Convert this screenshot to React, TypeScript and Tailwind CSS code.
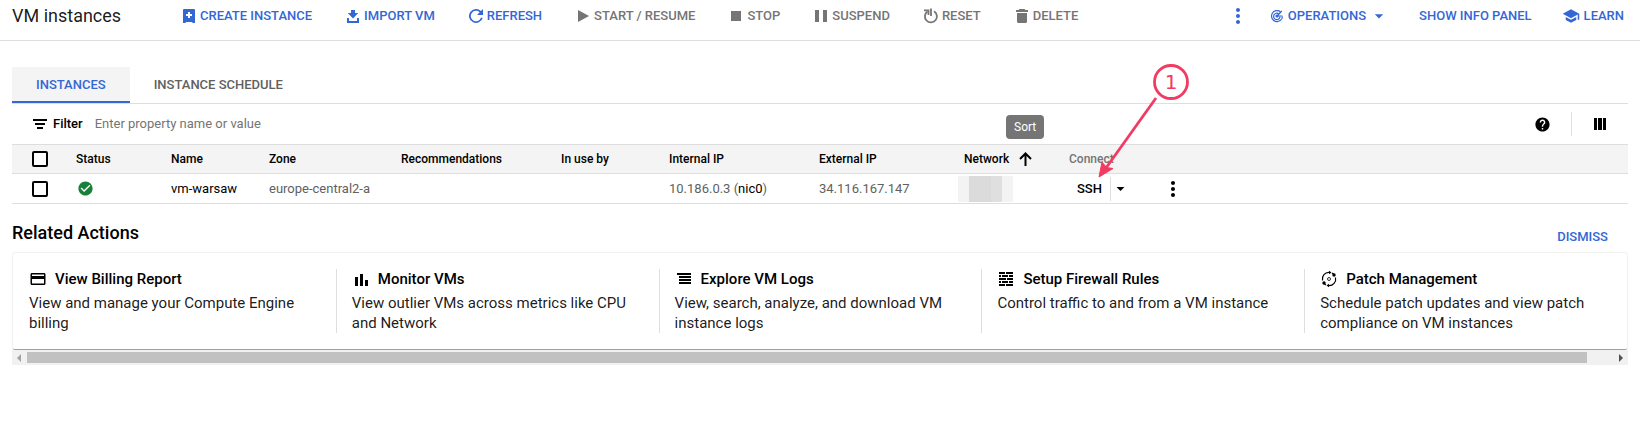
import React from 'react';
import {
  MdArrowDropDown,
  MdCheckCircle,
  MdCreditCard,
  MdHelp,
  MdMoreVert,
  MdSchool,
} from 'react-icons/md';

type IconProps = { className?: string };

const svgProps = { width: 18, height: 18, viewBox: '0 0 18 18', fill: 'currentColor', 'aria-hidden': true } as const;

const CreateIcon = () => (
  <svg {...svgProps}>
    <path fillRule="evenodd" d="M4 2h10a1 1 0 0 1 1 1v13h-2l-1.500-1h-5L5 16H3V3a1 1 0 0 1 1-1zm4 3v2H6v2h2v2h2V9h2V7h-2V5z" />
  </svg>
);
const ImportIcon = () => (
  <svg {...svgProps}>
    <path d="M7 3h4v3h3.200L9 11.500 3.800 6H7zM3 11h2v3h8v-3h2v5H3z" />
  </svg>
);
const RefreshIcon = () => (
  <svg {...svgProps}>
    <path d="M13.950 4.050A7 7 0 1 0 15.760 10.800H13.900A5.200 5.200 0 1 1 12.650 5.350L10 8h6V2z" />
  </svg>
);
const StartIcon = () => (
  <svg {...svgProps}>
    <path d="M4 3l11 6-11 6z" />
  </svg>
);
const StopIcon = () => (
  <svg {...svgProps}>
    <path d="M4 4h10v10H4z" />
  </svg>
);
const SuspendIcon = () => (
  <svg {...svgProps}>
    <path d="M3 3h4v12H3zM11 3h4v12h-4z" />
  </svg>
);
const ResetIcon = () => (
  <svg {...svgProps} fill="none" stroke="currentColor" strokeWidth="1.8">
    <path d="M12 4.300a6 6 0 1 1-6.500.2" />
    <path d="M9 1.500V9" />
    <path d="M2 3.400h4.500V8" />
  </svg>
);
const DeleteIcon = () => (
  <svg {...svgProps}>
    <path d="M6.500 2h5l1 1H15v2H3V3h2.500zM4 6h10v8.500a1.500 1.500 0 0 1-1.500 1.500h-7A1.500 1.500 0 0 1 4 14.500z" />
  </svg>
);
const OperationsIcon = () => (
  <svg {...svgProps} fill="none" stroke="currentColor" strokeWidth="1.2">
    <path d="M14.500 9.500a5.500 5.500 0 1 1-2-4.700" />
    <path d="M12 9.500a3.200 3.200 0 1 1-1.200-2.600" />
    <path d="M9 9l4.800-5M9 9h5.500" />
    <circle cx="9" cy="9" r="1" fill="currentColor" />
  </svg>
);
const MonitorIcon = () => (
  <svg {...svgProps}>
    <path d="M3 7h3v9H3zM8 4h3v12H8zM13 10h3v6h-3z" />
  </svg>
);
const LogsIcon = () => (
  <svg {...svgProps}>
    <path d="M2 3h14v2H2zM4 6h12v2H4zM4 9h12v2H4zM4 12h12v2H4z" />
  </svg>
);
const FirewallIcon = () => (
  <svg {...svgProps}>
    <path d="M2 2h6v2H2zM9 2h7v2H9zM2 5h2v2H2zM5 5h6v2H5zM12 5h4v2h-4zM2 8h7v2H2zM10 8h6v2h-6zM2 11h2v2H2zM5 11h6v2H5zM12 11h4v2h-4zM2 14h6v2H2zM9 14h7v2H9z" />
  </svg>
);
const PatchIcon = () => (
  <svg {...svgProps} fill="none" stroke="currentColor" strokeWidth="1.2">
    <path d="M2.500 10.500A6.600 6.600 0 0 1 9.500 2.400M15.500 7.500A6.600 6.600 0 0 1 8.500 15.600M4.200 13.700A6.600 6.600 0 0 0 6 15M12 3l1.800 1.300" />
    <circle cx="9" cy="9" r="1.500" strokeWidth="0.8" />
    <circle cx="14" cy="5" r="1.700" fill="currentColor" stroke="none" />
    <circle cx="4" cy="13" r="1.700" fill="currentColor" stroke="none" />
    <path d="M9 .8l2.500 1.700L9 4.200zM9 13.800l-2.500 1.700L9 17.200z" fill="currentColor" stroke="none" />
  </svg>
);
const FilterIcon = () => (
  <svg width="14" height="10" viewBox="0 0 14 10" fill="currentColor" aria-hidden="true">
    <path d="M0 0h14v2H0zM2 4h10v2H2zM4 8h6v2H4z" />
  </svg>
);
const ColumnsIcon = () => (
  <svg width="12" height="12" viewBox="0 0 12 12" fill="currentColor" aria-hidden="true">
    <path d="M0 0h3v12H0zM4 0h4v12H4zM9 0h3v12H9z" />
  </svg>
);
const SortUpIcon = () => (
  <svg width="13" height="14" viewBox="0 0 13 14" fill="none" stroke="currentColor" strokeWidth="2" aria-hidden="true">
    <path d="M6.500 14V2M1 7l5.500-5.500L12 7" />
  </svg>
);

const actions: { label: string; Icon: React.FC<IconProps>; primary?: boolean }[] = [
  { label: 'CREATE INSTANCE', Icon: CreateIcon, primary: true },
  { label: 'IMPORT VM', Icon: ImportIcon, primary: true },
  { label: 'REFRESH', Icon: RefreshIcon, primary: true },
  { label: 'START / RESUME', Icon: StartIcon },
  { label: 'STOP', Icon: StopIcon },
  { label: 'SUSPEND', Icon: SuspendIcon },
  { label: 'RESET', Icon: ResetIcon },
  { label: 'DELETE', Icon: DeleteIcon },
];

const related: { title: string; text: string; icon: React.ReactNode }[] = [
  { title: 'View Billing Report', text: 'View and manage your Compute Engine billing', icon: <MdCreditCard size={18} /> },
  { title: 'Monitor VMs', text: 'View outlier VMs across metrics like CPU and Network', icon: <MonitorIcon /> },
  { title: 'Explore VM Logs', text: 'View, search, analyze, and download VM instance logs', icon: <LogsIcon /> },
  { title: 'Setup Firewall Rules', text: 'Control traffic to and from a VM instance', icon: <FirewallIcon /> },
  { title: 'Patch Management', text: 'Schedule patch updates and view patch compliance on VM instances', icon: <PatchIcon /> },
];

function Toolbar() {
  return (
    <header className="flex h-[41px] items-center border-b border-[#dedede] pb-[9px] pl-3 pr-4 text-[13px] font-medium whitespace-nowrap">
      <h1 className="w-[168px] shrink-0 text-lg font-normal text-black/90">VM instances</h1>
      <div className="flex items-center gap-8">
        {actions.map(({ label, Icon, primary }) => (
          <button
            key={label}
            type="button"
            disabled={!primary}
            className={primary ? 'flex items-center gap-[2px] text-[#3367d6]' : 'flex items-center gap-[2px] text-[#757575]'}
          >
            <Icon />
            {label}
          </button>
        ))}
      </div>
      <div className="ml-auto flex items-center text-[#3367d6]">
        <button type="button" aria-label="More actions" className="mr-[18px]">
          <MdMoreVert size={24} />
        </button>
        <button type="button" className="mr-[30px] flex items-center gap-[2px]">
          <OperationsIcon />
          OPERATIONS
          <MdArrowDropDown size={20} className="ml-[1px]" />
        </button>
        <button type="button" className="mr-[30px]">SHOW INFO PANEL</button>
        <a href="#learn" className="flex items-center gap-1">
          <MdSchool size={18} />
          LEARN
        </a>
      </div>
    </header>
  );
}

function Tabs() {
  return (
    <div role="tablist" className="mt-[26px] flex h-[37px] border-b border-[#dedede] text-[13px] font-medium">
      <button type="button" role="tab" aria-selected="true" className="border-b-2 border-[#3367d6] bg-[#f4f4f4] px-6 pt-[2px] text-[#3367d6]">
        INSTANCES
      </button>
      <button type="button" role="tab" aria-selected="false" className="px-6 text-[#616161]">
        INSTANCE SCHEDULE
      </button>
    </div>
  );
}

function FilterBar() {
  return (
    <div className="flex h-10 items-center pl-[21px] pr-[22px] text-[13px]">
      <FilterIcon />
      <label htmlFor="filter" className="ml-1.5 font-medium">Filter</label>
      <input
        id="filter"
        type="text"
        placeholder="Enter property name or value"
        className="ml-3 min-w-0 flex-1 outline-none placeholder:text-[#757575]"
      />
      <button type="button" aria-label="Help" className="mr-5">
        <MdHelp size={17} />
      </button>
      <span className="h-6 w-px bg-[#e0e0e0]" />
      <button type="button" aria-label="Column display options" className="ml-[22px]">
        <ColumnsIcon />
      </button>
    </div>
  );
}

const checkbox = 'block size-4 appearance-none rounded-[2px] border-2 border-black bg-white';

function Callout() {
  return (
    <div className="pointer-events-none absolute -top-[82px] left-[18px] z-10 h-[120px] w-[110px] text-[#f23b62]">
      <svg width="110" height="120" viewBox="0 0 110 120" fill="none" aria-hidden="true">
        <circle cx="84" cy="19" r="16.500" stroke="currentColor" strokeWidth="2.800" fill="#fff" />
        <path d="M69 35L19 105" stroke="currentColor" strokeWidth="2.800" />
        <path d="M12 114l3-15 4.500 5.500 6.500 1z" fill="currentColor" stroke="currentColor" strokeWidth="1" />
      </svg>
      <span className="absolute left-[68px] top-[3px] flex h-8 w-8 items-center justify-center font-['DejaVu_Sans'] text-xl font-normal">1</span>
    </div>
  );
}

function InstancesTable() {
  return (
    <table className="w-full table-fixed border-collapse text-left text-[13px] text-[#616161]">
      <colgroup>
        <col className="w-[64px]" />
        <col className="w-[95px]" />
        <col className="w-[98px]" />
        <col className="w-[132px]" />
        <col className="w-[160px]" />
        <col className="w-[108px]" />
        <col className="w-[150px]" />
        <col className="w-[139px]" />
        <col className="w-[111px]" />
        <col className="w-[92px]" />
        <col />
      </colgroup>
      <thead>
        <tr className="h-[29px] border-y border-[#dedede] bg-[#f4f4f4] text-xs text-black *:p-0 *:font-medium">
          <th className="pl-5!"><input type="checkbox" aria-label="Select all rows" className={checkbox} /></th>
          <th>Status</th>
          <th>Name</th>
          <th>Zone</th>
          <th>Recommendations</th>
          <th>In use by</th>
          <th>Internal IP</th>
          <th>External IP</th>
          <th className="relative pl-1.5!">
            <button type="button" className="flex items-center gap-2.5">
              Network
              <SortUpIcon />
            </button>
            <span role="tooltip" className="absolute -top-[30px] left-12 flex h-6 items-center rounded bg-[#757575] px-2 font-normal text-white">
              Sort
            </span>
          </th>
          <th className="relative text-[#757575]">
            Connect
            <Callout />
          </th>
          <td />
        </tr>
      </thead>
      <tbody>
        <tr className="h-[30px] border-b border-[#dedede] *:p-0">
          <td className="pl-5!"><input type="checkbox" aria-label="Select vm-warsaw" className={checkbox} /></td>
          <td className="pl-px!"><MdCheckCircle size={17} className="text-[#188038]" aria-label="Running" /></td>
          <td><a href="#vm-warsaw" className="text-black">vm-warsaw</a></td>
          <td>europe-central2-a</td>
          <td />
          <td />
          <td>10.186.0.3 (<a href="#nic0" className="text-black">nic0</a>)</td>
          <td>34.116.167.147</td>
          <td>
            <div className="flex h-[26px]">
              <span className="w-[11px] bg-[#f3f3f3]" />
              <span className="w-[22px] bg-[#dbdbdb]" />
              <span className="w-[11px] bg-[#dfdfdf]" />
              <span className="w-[11px] bg-[#f3f3f3]" />
            </div>
          </td>
          <td>
            <div className="flex items-center pl-2 text-black">
              <button type="button" className="font-medium">SSH</button>
              <span className="ml-2 h-6 w-px bg-[#dedede]" />
              <button type="button" aria-label="SSH options"><MdArrowDropDown size={19} /></button>
            </div>
          </td>
          <td>
            <button type="button" aria-label="More actions for vm-warsaw" className="block text-black">
              <MdMoreVert size={24} />
            </button>
          </td>
        </tr>
      </tbody>
    </table>
  );
}

function RelatedActions() {
  return (
    <section>
      <div className="flex h-[49px] items-center justify-between pr-5">
        <h2 className="pt-2 text-lg font-medium leading-6">Related Actions</h2>
        <button type="button" className="pt-4 text-[13px] font-medium text-[#3367d6]">DISMISS</button>
      </div>
      <div className="mx-px grid grid-cols-5 rounded-[2px] border-b border-[#9e9e9e] bg-white py-4 shadow-[0_0_2px_0_rgba(0,0,0,0.2)]">
        {related.map(({ title, text, icon }) => (
          <article key={title} className="min-h-16 border-l border-[#dedede] pl-[15px] pr-4 text-[15px] leading-5 first:border-transparent">
            <h3 className="mb-1 flex items-center gap-2 font-medium">
              {icon}
              {title}
            </h3>
            <p className="text-black/90">{text}</p>
          </article>
        ))}
      </div>
      <div className="flex h-[15px] items-center bg-[#f1f1f1] px-1">
        <button type="button" aria-label="Scroll left" className="w-[11px] text-[#a3a3a3]">
          <svg width="5" height="8" viewBox="0 0 5 8" fill="currentColor" aria-hidden="true"><path d="M5 0v8L1 4z" /></svg>
        </button>
        <div className="flex-1">
          <div className="h-[11px] w-[98%] bg-[#c1c1c1]" />
        </div>
        <button type="button" aria-label="Scroll right" className="w-[5px] text-[#505050]">
          <svg width="5" height="8" viewBox="0 0 5 8" fill="currentColor" aria-hidden="true"><path d="M0 0v8l4-4z" /></svg>
        </button>
      </div>
    </section>
  );
}

export default function App() {
  return (
    <div className="bg-white font-[Roboto,sans-serif] text-black">
      <Toolbar />
      <main className="px-3">
        <Tabs />
        <FilterBar />
        <InstancesTable />
        <RelatedActions />
      </main>
    </div>
  );
}
